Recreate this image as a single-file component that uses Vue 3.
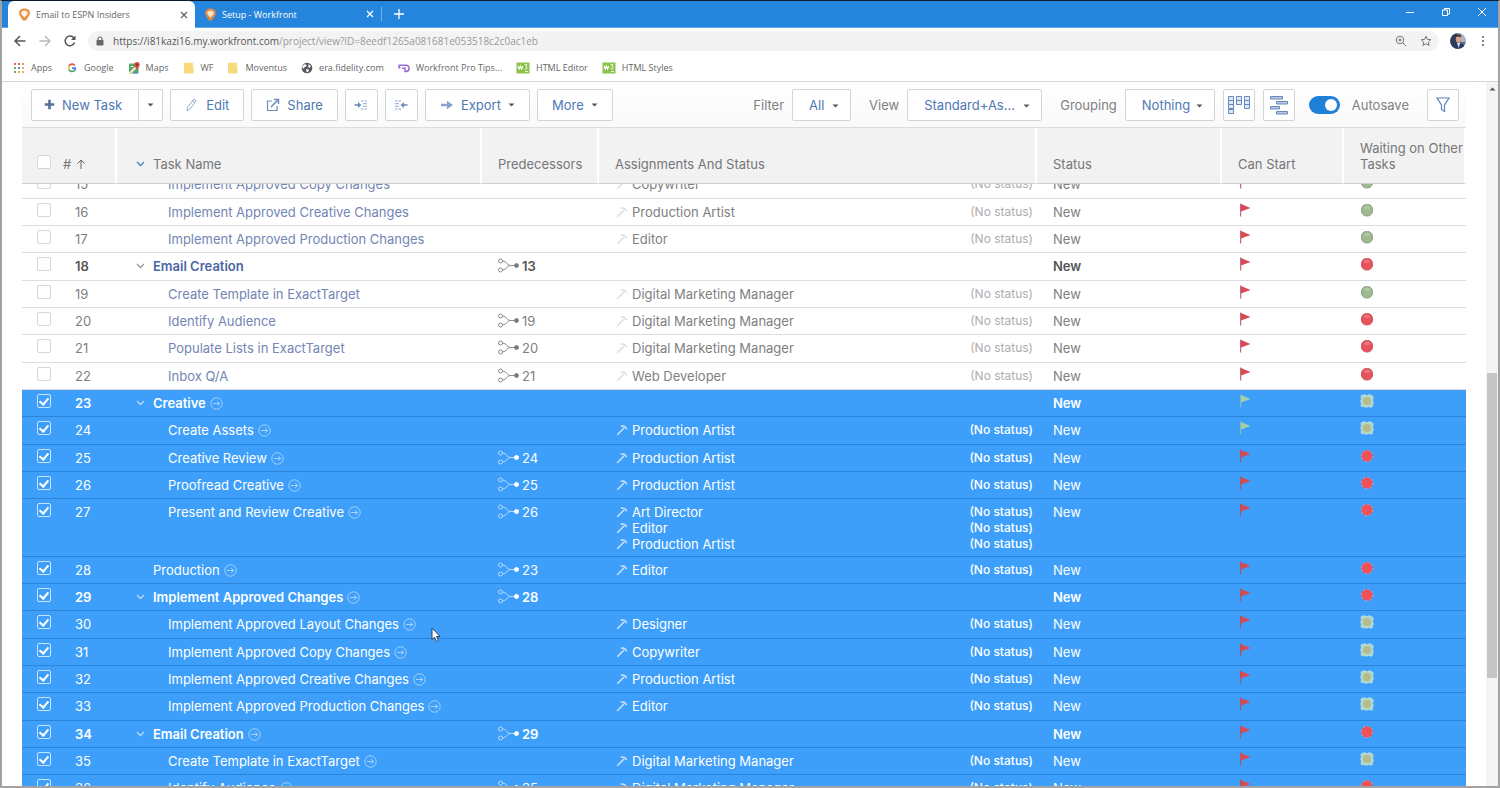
<script setup>
import { ref, onMounted } from 'vue'

const bookmarks = [
  { icon: 'apps', label: 'Apps' },
  { icon: 'google', label: 'Google' },
  { icon: 'maps', label: 'Maps' },
  { icon: 'folder', label: 'WF' },
  { icon: 'folder', label: 'Moventus' },
  { icon: 'globe', label: 'era.fidelity.com' },
  { icon: 'workfront', label: 'Workfront Pro Tips...' },
  { icon: 'w3', label: 'HTML Editor' },
  { icon: 'w3', label: 'HTML Styles' }
]

const DMM = 'Digital Marketing Manager'
const row = (id, name, level, people, flag, dot, extra = {}) => ({
  id, name, level, people, flag, dot, selected: id > 22, parent: false, pred: null, ...extra
})

const rows = ref([
  row(15, 'Implement Approved Copy Changes', 2, ['Copywriter'], 'red', 'green'),
  row(16, 'Implement Approved Creative Changes', 2, ['Production Artist'], 'red', 'green'),
  row(17, 'Implement Approved Production Changes', 2, ['Editor'], 'red', 'green'),
  row(18, 'Email Creation', 1, [], 'red', 'red', { parent: true, pred: 13 }),
  row(19, 'Create Template in ExactTarget', 2, [DMM], 'red', 'green'),
  row(20, 'Identify Audience', 2, [DMM], 'red', 'red', { pred: 19 }),
  row(21, 'Populate Lists in ExactTarget', 2, [DMM], 'red', 'red', { pred: 20 }),
  row(22, 'Inbox Q/A', 2, ['Web Developer'], 'red', 'red', { pred: 21 }),
  row(23, 'Creative', 1, [], 'green', 'green', { parent: true }),
  row(24, 'Create Assets', 2, ['Production Artist'], 'green', 'green'),
  row(25, 'Creative Review', 2, ['Production Artist'], 'red', 'red', { pred: 24 }),
  row(26, 'Proofread Creative', 2, ['Production Artist'], 'red', 'red', { pred: 25 }),
  row(27, 'Present and Review Creative', 2, ['Art Director', 'Editor', 'Production Artist'], 'red', 'red', { pred: 26 }),
  row(28, 'Production', 1, ['Editor'], 'red', 'red', { pred: 23 }),
  row(29, 'Implement Approved Changes', 1, [], 'red', 'red', { parent: true, pred: 28 }),
  row(30, 'Implement Approved Layout Changes', 2, ['Designer'], 'red', 'green'),
  row(31, 'Implement Approved Copy Changes', 2, ['Copywriter'], 'red', 'green'),
  row(32, 'Implement Approved Creative Changes', 2, ['Production Artist'], 'red', 'green'),
  row(33, 'Implement Approved Production Changes', 2, ['Editor'], 'red', 'green'),
  row(34, 'Email Creation', 1, [], 'red', 'red', { parent: true, pred: 29 }),
  row(35, 'Create Template in ExactTarget', 2, [DMM], 'red', 'green'),
  row(36, 'Identify Audience', 2, [DMM], 'red', 'red', { pred: 35 })
])

const autosave = ref(true)
const list = ref(null)
onMounted(() => {
  list.value.scrollTop = 13
})
</script>

<template>
  <div class="window">
    <header class="browser">
      <div class="tabs">
        <div class="tab active">
          <svg class="fav" viewBox="0 0 12 12"><path d="M6 .5C9 .5 11 2 11 4.600 11 7.500 8.500 8.800 7.600 11.500H4.400C3.500 8.800 1 7.500 1 4.600 1 2 3 .5 6 .5Z" fill="#e8923f"/><path d="M6 2.300c1.800 0 3 .9 3 2.400S7.600 7.200 6 9C4.400 7.200 3 6.200 3 4.700s1.200-2.400 3-2.400Z" fill="#fdf1e2"/></svg>
          <span class="tab-title">Email to ESPN Insiders</span>
          <button class="x" aria-label="Close tab"><svg viewBox="0 0 8 8"><path d="M1 1l6 6M7 1L1 7" /></svg></button>
        </div>
        <div class="tab">
          <svg class="fav" viewBox="0 0 12 12"><path d="M6 .5C9 .5 11 2 11 4.600 11 7.500 8.500 8.800 7.600 11.500H4.400C3.500 8.800 1 7.500 1 4.600 1 2 3 .5 6 .5Z" fill="#d98a4a"/><path d="M6 2.300c1.800 0 3 .9 3 2.400S7.600 7.200 6 9C4.400 7.200 3 6.200 3 4.700s1.200-2.400 3-2.400Z" fill="#fbe3c8"/></svg>
          <span class="tab-title">Setup - Workfront</span>
          <button class="x" aria-label="Close tab"><svg viewBox="0 0 8 8"><path d="M1 1l6 6M7 1L1 7" /></svg></button>
        </div>
        <button class="newtab" aria-label="New tab"><svg viewBox="0 0 10 10"><path d="M5 0v10M0 5h10" /></svg></button>
        <div class="winbtns">
          <button aria-label="Minimize"><svg viewBox="0 0 10 10"><path d="M1 5.500h8" /></svg></button>
          <button aria-label="Restore"><svg viewBox="0 0 10 10"><path d="M1.500 3h5v5.500h-5zM3.500 3V1.500h5V7h-2" /></svg></button>
          <button aria-label="Close"><svg viewBox="0 0 10 10"><path d="M1 1l8 8M9 1L1 9" /></svg></button>
        </div>
      </div>

      <div class="address">
        <button class="nav" aria-label="Back"><svg viewBox="0 0 12 12"><path d="M11.500 6H1M6 1L1 6l5 5" /></svg></button>
        <button class="nav off" aria-label="Forward"><svg viewBox="0 0 12 12"><path d="M.5 6H11M6 1l5 5-5 5" /></svg></button>
        <button class="nav" aria-label="Reload"><svg viewBox="0 0 12 12"><path d="M10.500 7.500A4.800 4.800 0 1 1 9.800 3" /><path d="M11.500 .5v4.500H7z" class="solid" /></svg></button>
        <div class="pill">
          <svg class="lock" viewBox="0 0 8 10"><path d="M2 4.500V3a2 2 0 0 1 4 0v1.500" fill="none" stroke="#666" stroke-width="1.200"/><rect x=".5" y="4" width="7" height="5.500" rx=".8" fill="#666"/></svg>
          <span class="url"><b>https://i81kazi16.my.workfront.com</b>/project/view?ID=8eedf1265a081681e053518c2c0ac1eb</span>
          <button class="pbtn" aria-label="Zoom"><svg viewBox="0 0 12 12"><circle cx="5" cy="5" r="3.800"/><path d="M8 8l3.200 3.200M3.300 5h3.400M5 3.300v3.400"/></svg></button>
          <button class="pbtn" aria-label="Bookmark this page"><svg viewBox="0 0 12 12"><path d="M6 1.200l1.400 3.200 3.500.3-2.600 2.300.8 3.500L6 8.700l-3.100 1.800.8-3.500L1.100 4.700l3.500-.3z"/></svg></button>
        </div>
        <svg class="avatar" viewBox="0 0 16 16"><defs><clipPath id="face"><circle cx="8" cy="8" r="7.800"/></clipPath></defs><g clip-path="url(#face)"><rect width="16" height="16" fill="#5b6a86"/><rect width="7" height="16" fill="#333b52"/><rect x="11" width="5" height="9" fill="#a9b7cc"/><path d="M0 16c1-5 4-6 8-6s7 2 8 6z" fill="#273a66"/><path d="M7 10h3l-1.200 5z" fill="#e4e6ee"/><ellipse cx="8.500" cy="6.200" rx="2.700" ry="3.600" fill="#d8a28c"/><path d="M5.600 4.500c0-3.500 5.800-4 5.800 0-2-1.400-4-1.400-5.800 0Z" fill="#3a2d2c"/></g></svg>
        <button class="dots" aria-label="Browser menu"><svg viewBox="0 0 4 12"><circle cx="2" cy="2" r="1.100"/><circle cx="2" cy="6" r="1.100"/><circle cx="2" cy="10" r="1.100"/></svg></button>
      </div>

      <nav class="bookmarks">
        <a v-for="(b, i) in bookmarks" :key="i" href="#">
          <svg v-if="b.icon === 'apps'" viewBox="0 0 12 12"><g><rect x="1" y="1" width="2" height="2" fill="#d9695f"/><rect x="5" y="1" width="2" height="2" fill="#d9695f"/><rect x="9" y="1" width="2" height="2" fill="#e3a04c"/><rect x="1" y="5" width="2" height="2" fill="#6fae63"/><rect x="5" y="5" width="2" height="2" fill="#5a87cc"/><rect x="9" y="5" width="2" height="2" fill="#e3b34c"/><rect x="1" y="9" width="2" height="2" fill="#6fae63"/><rect x="5" y="9" width="2" height="2" fill="#e3b34c"/><rect x="9" y="9" width="2" height="2" fill="#e3b34c"/></g></svg>
          <svg v-else-if="b.icon === 'google'" viewBox="0 0 12 12" fill="none" stroke-width="1.700"><path d="M8.900 3.600A3.400 3.400 0 0 0 3 4.300" stroke="#e0574c"/><path d="M3 4.300a3.400 3.400 0 0 0 0 3.300" stroke="#eebb3f"/><path d="M3 7.600a3.400 3.400 0 0 0 5.300 1" stroke="#4aa65c"/><path d="M8.300 8.600A3 3 0 0 0 9.300 6.200H6" stroke="#4a80dd"/></svg>
          <svg v-else-if="b.icon === 'maps'" viewBox="0 0 12 12"><rect x="1" y="1.500" width="9.500" height="10" rx="1" fill="#57a866"/><path d="M1 10.500l8-8 1.500 1.500-7 7.500H2z" fill="#f0e9c0"/><path d="M5 11.500l2.500-3 3 3z" fill="#5b8bd8"/><path d="M3 4.500h2" stroke="#fff"/><path d="M9 0a2.700 2.700 0 0 1 2.700 2.700C11.700 4.500 9 7.500 9 7.500S6.300 4.500 6.300 2.700A2.700 2.700 0 0 1 9 0Z" fill="#d24a41"/><circle cx="9" cy="2.700" r=".9" fill="#7d211c"/></svg>
          <svg v-else-if="b.icon === 'folder'" viewBox="0 0 12 12"><path d="M2 .8h7.500q1 0 1 1v8.700q0 1-1 1H2q-1 0-1-1V1.800q0-1 1-1Z" fill="#f7da7c"/><path d="M9 .8h.5q1 0 1 1v3H9z" fill="#fbe9ad"/></svg>
          <svg v-else-if="b.icon === 'globe'" viewBox="0 0 12 12"><circle cx="6" cy="6" r="5.300" fill="#555"/><path d="M3 2.500c2-.8 3 .3 2.500 1.500S3 4.800 3.200 6 1.500 6 1.200 5.500 2 3 3 2.500ZM7 2l3 2-1.500 2L7 5l.5-1.500zM5 7l3 .5L7.500 9.500 6 10.500 5.200 9z" fill="#f5f5f5"/></svg>
          <svg v-else-if="b.icon === 'workfront'" viewBox="0 0 12 12" fill="none" stroke="#9a6bd6" stroke-width="1.500"><path d="M.5 3.200h7.500A3 3 0 0 1 8 9.500H7V6.300H4"/><path d="M1 3.200v2.600h1.500"/></svg>
          <svg v-else class="wide" viewBox="0 0 14 12"><rect x=".5" y=".5" width="13" height="11" fill="#8cc24a"/><path d="M2 4l1.200 3 1.200-3 1.200 3 1.200-3" stroke="#fff" stroke-width="1.100" fill="none"/><path d="M8.500 2.500H11L9.700 4.500q2 .4 1.300 2-1 1.300-2.500.3M9 9.500h3" stroke="#e8f5d4" fill="none"/></svg>
          <span>{{ b.label }}</span>
        </a>
      </nav>
    </header>

    <div class="page">
      <main class="content">
        <div class="toolbar">
          <div class="split">
            <button class="btn"><svg class="i11" viewBox="0 0 11 11"><path d="M5.500 .8v9.400M.8 5.500h9.400" stroke="#56709b" stroke-width="2.600" fill="none"/></svg>New Task</button>
            <button class="btn arrow" aria-label="More new task options"><svg class="caret" viewBox="0 0 7 4"><path d="M.5 .5h6l-3 3z"/></svg></button>
          </div>
          <button class="btn"><svg class="i14" viewBox="0 0 14 14" fill="none" stroke="#8fa9cf"><path d="M2.500 9.500L8.800 1.200l2.200 1.700L4.800 11.200 2 12.800zM7.500 2.900l2.200 1.700"/></svg>Edit</button>
          <button class="btn"><svg class="i14" viewBox="0 0 14 14" fill="none" stroke="#6d8cb8" stroke-width="1.200"><path d="M6 3H1.500v9.500H11V8"/><path d="M5 9l6.500-6.500M8 1.500h4.500V6" stroke-width="1.500"/></svg>Share</button>
          <button class="btn sq" aria-label="Indent"><svg class="i14" viewBox="0 0 14 14" fill="none" stroke="#6d8cb8"><path d="M.5 7H6" stroke-width="1.600"/><path d="M4 4l3.500 3L4 10z" fill="#6d8cb8" stroke="none"/><path d="M7 3h2.500M10.500 3H13M9 5.700h4M9 8.300h4M7 11h2.500M10.500 11H13" stroke="#8fa9cf"/></svg></button>
          <button class="btn sq" aria-label="Outdent"><svg class="i14" viewBox="0 0 14 14" fill="none" stroke="#6d8cb8"><path d="M13.500 7H8.500" stroke-width="1.600"/><path d="M10 4L6.500 7l3.500 3z" fill="#6d8cb8" stroke="none"/><path d="M7 3H4.500M3.500 3H1M5 5.700H1M5 8.300H1M7 11H4.500M3.500 11H1" stroke="#8fa9cf"/></svg></button>
          <button class="btn"><svg class="i14" viewBox="0 0 14 14"><path d="M1 5.700h6V2.800L13 7l-6 4.200V8.300H1z" fill="#8aa3c8"/></svg>Export<svg class="caret" viewBox="0 0 7 4"><path d="M.5 .5h6l-3 3z"/></svg></button>
          <button class="btn">More<svg class="caret" viewBox="0 0 7 4"><path d="M.5 .5h6l-3 3z"/></svg></button>

          <div class="right">
            <label for="f">Filter</label>
            <div class="sel w-all"><select id="f"><option>All</option></select><svg class="caret" viewBox="0 0 7 4"><path d="M.5 .5h6l-3 3z"/></svg></div>
            <label for="v">View</label>
            <div class="sel w-view"><select id="v"><option>Standard+As...</option></select><svg class="caret" viewBox="0 0 7 4"><path d="M.5 .5h6l-3 3z"/></svg></div>
            <label for="g">Grouping</label>
            <div class="sel w-group"><select id="g"><option>Nothing</option></select><svg class="caret" viewBox="0 0 7 4"><path d="M.5 .5h6l-3 3z"/></svg></div>
            <button class="btn sq" aria-label="Agile view"><svg class="i24" viewBox="0 0 24 22" fill="#dfe8f5" stroke="#6688bb"><path d="M1.500 2.500h5v4h-5zM1.500 6.500h5v4h-5zM1.500 10.500h5v4h-5zM1.500 15.500h5v4h-5zM9.500 2.500h5v4h-5zM9.500 6.500h5v4h-5zM17.500 2.500h5v4h-5zM17.500 6.500h5v4h-5zM17.500 10.500h5v4h-5z"/></svg></button>
            <button class="btn sq" aria-label="Gantt chart"><svg class="i20" viewBox="0 0 20 20" fill="#b9cae4" stroke="#6688bb"><path d="M1.500 1.500h12v2.500h-12zM7.500 6.500h11V9h-11zM1.500 11.500h9V14h-9zM7.500 16.500h11V19h-11z"/></svg></button>
            <label class="toggle"><input v-model="autosave" type="checkbox" role="switch"><span>Autosave</span></label>
            <button class="btn sq" aria-label="Quick filter"><svg class="i16" viewBox="0 0 16 16" fill="none" stroke="#5f82bb" stroke-width="1.200"><path d="M2 1h12L9.500 8v6.500L6.500 12.500V8z"/></svg></button>
          </div>
        </div>

        <div ref="list" class="list">
          <table>
            <colgroup><col class="c1"><col class="c2"><col class="c3"><col><col class="c5"><col class="c6"><col class="c6"></colgroup>
            <thead>
              <tr>
                <th scope="col" class="idcol"><div class="idcell"><input type="checkbox" aria-label="Select all tasks"><span class="hash">#</span><svg class="up" viewBox="0 0 10 10"><path d="M5 10V1M1.500 4.500L5 1l3.500 3.500"/></svg></div></th>
                <th scope="col" class="namecol"><div class="namecell"><svg class="chev blue" viewBox="0 0 9 6"><path d="M1 1l3.500 3.500L8 1"/></svg>Task Name</div></th>
                <th scope="col">Predecessors</th>
                <th scope="col">Assignments And Status</th>
                <th scope="col">Status</th>
                <th scope="col">Can Start</th>
                <th scope="col">Waiting on Other Tasks</th>
              </tr>
            </thead>
            <tbody>
              <tr v-for="r in rows" :key="r.id" :class="{ selected: r.selected, parent: r.parent }">
                <td class="idcol"><div class="idcell"><input v-model="r.selected" type="checkbox" :aria-label="'Select task ' + r.id"><span class="num">{{ r.id }}</span></div></td>
                <td class="namecol">
                  <div class="namecell" :class="'lvl' + r.level">
                    <svg v-if="r.parent" class="chev" viewBox="0 0 9 6"><path d="M1 1l3.500 3.500L8 1"/></svg>
                    <a href="#">{{ r.name }}</a>
                    <svg v-if="r.selected" class="go" viewBox="0 0 13 13"><circle cx="6.500" cy="6.500" r="5.700"/><path d="M3 6.500h6.500M7.200 4.200l2.500 2.300-2.500 2.300"/></svg>
                  </div>
                </td>
                <td><div v-if="r.pred" class="pred"><svg viewBox="0 0 22 16"><circle cx="2.500" cy="3" r="2"/><circle cx="2.500" cy="12" r="2"/><path d="M4.500 3C8.500 3 9 7.500 12.500 7.500H17M4.500 12C8.500 12 9 7.500 12.500 7.500"/><circle cx="18.500" cy="7.500" r="2" class="solid"/></svg>{{ r.pred }}</div></td>
                <td class="assign">
                  <div v-for="p in r.people" :key="p" class="person"><svg viewBox="0 0 12 12"><path d="M1.300 10.700L8 4"/><path d="M4.800 2.200C7 1.500 9.500 2.300 10.700 5.300"/></svg><span>{{ p }}</span><span class="nostatus">(No status)</span></div>
                </td>
                <td>New</td>
                <td><svg class="flag" :class="r.flag" viewBox="0 0 13 14"><path class="cloth" d="M2 1l9.500 4L2 8.500z"/><path class="pole" d="M1.700 .5v13"/></svg></td>
                <td><svg class="light" viewBox="0 0 14 14">
                  <template v-if="r.selected && r.dot === 'green'"><path d="M3 1h8q2 0 2 2v8q0 2-2 2H3q-2 0-2-2V3q0-2 2-2Z" fill="#b3d6c4" stroke="#b4dcee" stroke-dasharray="3 2"/><circle cx="7" cy="7" r="4" fill="#b3bd8c"/></template>
                  <template v-else-if="r.selected"><circle cx="7" cy="7" r="5.800" fill="#ee5158" stroke="#d39cb8" stroke-dasharray="2 2.500"/></template>
                  <template v-else><rect x="1.500" y="1.500" width="11" height="11.500" rx="5" :fill="r.dot === 'red' ? '#e8525d' : '#9dba90'" :stroke="r.dot === 'red' ? '#c95560' : '#8c9f84'"/><ellipse cx="7" cy="4.500" rx="3.200" ry="1.700" fill="#fff" opacity=".2"/></template>
                </svg></td>
              </tr>
            </tbody>
          </table>
        </div>
      </main>
      <div class="scrollbar"><svg viewBox="0 0 7 4"><path d="M.5 3.500h6l-3-3z"/></svg><div class="thumb"></div></div>
    </div>

    <svg class="cursor" viewBox="0 0 10 16"><path d="M1 1v11.500l2.600-2.300 1.800 4.300 2-.9-1.800-4.100H9z" fill="#fff" stroke="#2b3f5e"/></svg>
  </div>
</template>

<style>
body { margin: 0; overflow: hidden; }
</style>

<style scoped>
* { box-sizing: border-box; }
button { font: inherit; color: inherit; border: 0; background: none; padding: 0; margin: 0; display: flex; align-items: center; justify-content: center; }
a { color: inherit; text-decoration: none; }
svg { display: block; flex: none; }
.window { position: relative; height: 100vh; display: flex; flex-direction: column; background: #fff; border: solid #a3a3a3; border-width: 0 2px 2px; border-top: 1px solid #0d1b2b; font-family: "Inter", "Liberation Sans", sans-serif; font-size: 13px; color: #808080; }

.browser { font-family: "Open Sans", "Noto Sans", sans-serif; font-size: 9px; border-bottom: 1px solid #d5d5d5; }
.tabs { display: flex; height: 27px; background: #2585dd; border-bottom: 1px solid #5fa9ea; padding-left: 6px; color: #fff; }
.tab { display: flex; align-items: center; width: 187px; padding: 0 4px 0 9px; }
.tab.active { background: #fff; color: #666; border-radius: 6px 6px 0 0; margin-bottom: -1px; padding-left: 10px; }
.tab:not(.active) { border-right: 1px solid #6bb0ef; margin: 6px 0; }
.fav { width: 13px; height: 13px; margin-right: 5px; }
.tab-title { flex: 1; }
.x { width: 14px; height: 14px; }
.x svg { width: 8px; height: 8px; }
.x svg path, .newtab path, .winbtns path { stroke: currentColor; stroke-width: 1.300; fill: none; }
.newtab { width: 34px; }
.newtab svg { width: 10px; height: 10px; }
.winbtns { display: flex; gap: 26px; margin-left: auto; padding: 0 11px 4px; }
.winbtns svg { width: 10px; height: 10px; }
.winbtns path { stroke-width: 1; }

.address { display: flex; align-items: center; height: 26px; padding: 0 10px; }
.nav { width: 26px; height: 20px; margin-right: -1px; }
.nav:first-child { margin-left: -5px; }
.nav svg { width: 12px; height: 12px; }
.nav path { fill: none; stroke: #555; stroke-width: 1.500; }
.nav path.solid { fill: #555; stroke: none; }
.nav.off path { stroke: #bbb; }
.pill { flex: 1; display: flex; align-items: center; height: 20px; margin-left: 6px; padding: 0 1px 0 8px; border-radius: 10px; background: #f3f3f4; }
.lock { width: 8px; height: 10px; margin-right: 9px; }
.url { flex: 1; color: #999; font-size: 10px; white-space: nowrap; }
.url b { font-weight: 400; color: #555; }
.pbtn { width: 25px; height: 18px; }
.pbtn svg { width: 12px; height: 12px; fill: none; stroke: #777; }
.avatar { width: 16px; height: 16px; margin-left: 11px; }
.dots { width: 16px; height: 16px; margin-left: 9px; margin-right: -3px; }
.dots svg { width: 4px; height: 12px; fill: #666; }

.bookmarks { display: flex; align-items: center; height: 27px; padding-left: 11px; gap: 14px; color: #666; }
.bookmarks a { display: flex; align-items: center; gap: 6px; }
.bookmarks svg { width: 12px; height: 12px; }
.bookmarks svg.wide { width: 14px; }

.page { flex: 1; min-height: 0; display: flex; }
.content { flex: 1; min-width: 0; display: flex; flex-direction: column; padding: 0 20px; }
.toolbar { display: flex; align-items: center; gap: 7px; height: 46px; padding: 0 7px 0 9px; background: linear-gradient(#fff, #f9f9fa); border-bottom: 1px solid #ddd; }
.btn { height: 32px; padding: 0 14px; gap: 7px; border: 1px solid #d2d4d8; border-radius: 2px; background: #fff; color: #4f78b3; white-space: nowrap; }
.split { display: flex; }
.split .btn:first-child { border-radius: 2px 0 0 2px; padding: 0 16px 0 12px; }
.split .arrow { width: 25px; padding: 0; margin-left: -1px; }
.btn.sq { width: 33px; padding: 0; }
.caret { width: 7px; height: 4px; fill: #555; }
.i11 { width: 11px; height: 11px; }
.i14 { width: 14px; height: 14px; }
.i16 { width: 16px; height: 16px; }
.i20 { width: 20px; height: 20px; }
.i24 { width: 24px; height: 22px; }
.right { display: flex; align-items: center; gap: 8px; margin-left: auto; }
.right > .btn.sq { width: 32px; }
.right > label + .sel { margin-right: 10px; }
.right > .sel.w-group { margin-right: 0; }
.sel { position: relative; }
.sel .caret { position: absolute; right: 12px; top: 15px; pointer-events: none; }
select { appearance: none; width: 100%; height: 32px; padding: 0 16px; border: 1px solid #d2d4d8; border-radius: 2px; background: #fff; font: inherit; color: #4f78b3; }
.w-all { width: 59px; }
.w-view { width: 135px; }
.w-group { width: 90px; }
.toggle { display: flex; align-items: center; gap: 12px; margin: 0 10px 0 6px; }
.toggle input { appearance: none; width: 31px; height: 18px; margin: 0; border-radius: 9px; background: #bbb; display: flex; align-items: center; padding: 0 3px; }
.toggle input::before { content: ""; width: 12px; height: 12px; border-radius: 50%; background: #fff; }
.toggle input:checked { background: #1f80d8; justify-content: flex-end; }

.list { flex: 1; min-height: 0; overflow: hidden; }
table { width: 100%; table-layout: fixed; border-collapse: separate; border-spacing: 0; }
.c1 { width: 95px; } .c2 { width: 365px; } .c3 { width: 117px; } .c5 { width: 185px; } .c6 { width: 122px; }
th { position: sticky; top: 0; z-index: 1; height: 56px; padding: 0 0 11px 16px; vertical-align: bottom; text-align: left; font-weight: 400; line-height: 16px; color: #767678; background: #f2f2f3; border-right: 2px solid #fff; border-bottom: 1px solid #cfcfd1; }
td { padding: 5px 0 4px 16px; height: 27px; vertical-align: top; line-height: 16px; border-bottom: 1px solid #dcdde3; }
tbody tr:nth-child(3n+1) td { height: 28px; }
.idcell, .namecell, .pred, .person { display: flex; align-items: center; }
th.idcol, td.idcol { padding-left: 15px; }
.idcell { height: 16px; }
.idcell input { appearance: none; width: 14px; height: 14px; margin: -4px 0 0; border: 1px solid #d6d6da; border-radius: 2px; background: #fff; }
.num { margin-left: 24px; }
.hash { margin: 0 5px 0 12px; }
.up { width: 10px; height: 10px; fill: none; stroke: #666; }
td.namecol, th.namecol { padding-left: 19px; }
.chev { width: 9px; height: 6px; margin-right: 8px; fill: none; stroke: #999; stroke-width: 1.300; }
.chev.blue { stroke: #4c82c3; }
.namecell a { color: #7385b3; }
.lvl1:not(:has(.chev)) { padding-left: 17px; }
.lvl2 { padding-left: 32px; }
.go { width: 13px; height: 13px; margin-left: 4px; fill: none; stroke: #a6d3fb; }
.pred svg { width: 22px; height: 16px; margin-right: 2px; fill: none; stroke: #8a8a8a; }
.pred svg .solid { fill: #777; }
td.assign { padding-right: 4px; }
.person svg { width: 12px; height: 12px; margin: 0 4px 0 1px; fill: none; stroke: #ddd; stroke-width: 1.500; }
.nostatus { margin-left: auto; font-size: 12px; color: #adadad; }
.flag { width: 13px; height: 14px; margin: -1px 0 0 1px; }
.flag .cloth { fill: #d84a55; }
.flag .pole { stroke: #b84b55; }
.flag.green .cloth { fill: #a4cfae; }
.flag.green .pole { stroke: #8cc3a4; }
.light { width: 14px; height: 14px; margin-top: -1px; }
.parent { font-weight: 600; color: #555; }
.parent .namecell a { color: #4c66a5; }
tr.selected { color: #fff; }
tr.selected td { background: #3d9ffa; border-bottom-color: #2b84d6; }
.selected .namecell a, .selected .nostatus { color: inherit; }
.selected .nostatus { font-weight: 500; }
.selected input { border-color: #c9e5ff; background: transparent; display: flex; justify-content: center; align-items: center; }
.selected input:checked::before { content: ""; width: 4px; height: 7px; margin-top: -2px; border: solid #fff; border-width: 0 2px 2px 0; transform: rotate(40deg); }
.selected .chev { stroke: #b9dcfb; }
.selected .pred svg { stroke: #b4dafc; }
.selected .pred svg .solid { fill: #fff; stroke: #fff; }
.selected .person svg { stroke: #cfe2fa; }
.scrollbar { width: 12px; background: #f4f4f4; display: flex; flex-direction: column; align-items: center; padding-top: 5px; }
.scrollbar svg { width: 7px; height: 4px; fill: #555; }
.thumb { width: 10px; height: 305px; margin-top: 282px; background: #c6c6c6; }
.cursor { position: absolute; left: 429px; top: 626px; width: 10px; height: 16px; }
</style>
